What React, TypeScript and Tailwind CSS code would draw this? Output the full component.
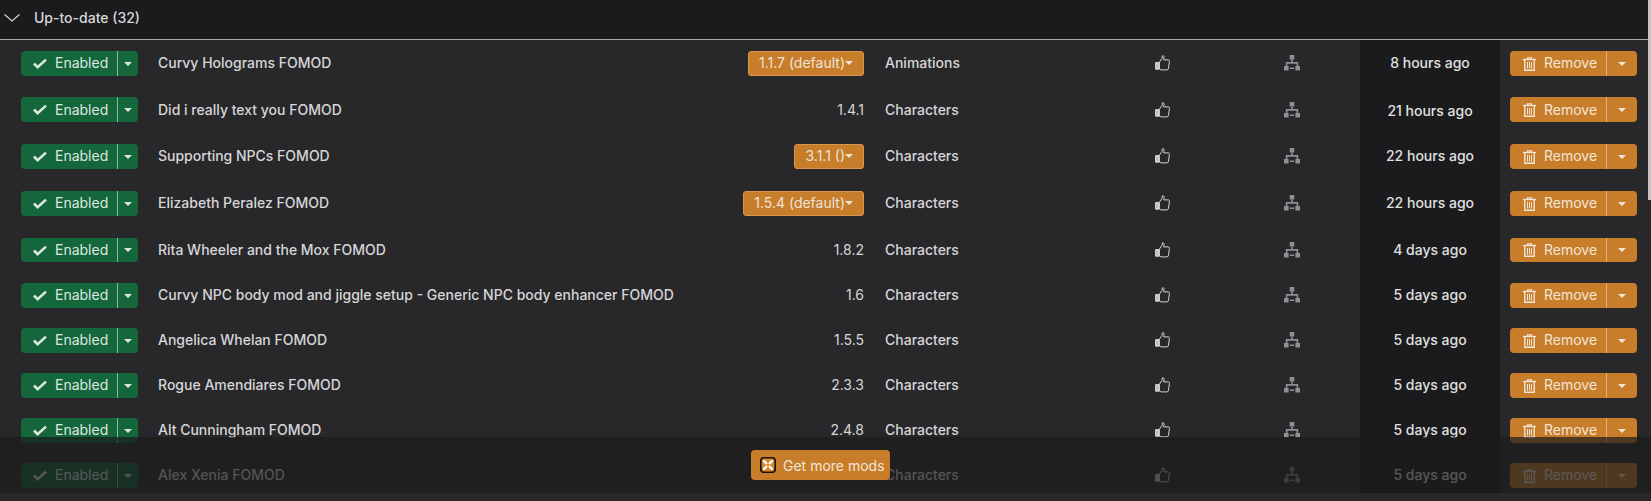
import React from "react";

const rows: [string, string, boolean, string, string, number][] = [
  ["Curvy Holograms FOMOD", "1.1.7 (default)", true, "Animations", "8 hours ago", 47],
  ["Did i really text you FOMOD", "1.4.1", false, "Characters", "21 hours ago", 46],
  ["Supporting NPCs FOMOD", "3.1.1 ()", true, "Characters", "22 hours ago", 47],
  ["Elizabeth Peralez FOMOD", "1.5.4 (default)", true, "Characters", "22 hours ago", 47],
  ["Rita Wheeler and the Mox FOMOD", "1.8.2", false, "Characters", "4 days ago", 45],
  ["Curvy NPC body mod and jiggle setup - Generic NPC body enhancer FOMOD", "1.6", false, "Characters", "5 days ago", 45],
  ["Angelica Whelan FOMOD", "1.5.5", false, "Characters", "5 days ago", 45],
  ["Rogue Amendiares FOMOD", "2.3.3", false, "Characters", "5 days ago", 45],
  ["Alt Cunningham FOMOD", "2.4.8", false, "Characters", "5 days ago", 45],
  ["Alex Xenia FOMOD", "3.1.1", false, "Characters", "5 days ago", 45],
];

const Caret = () => (
  <svg width="8" height="4" viewBox="0 0 8 4" className="block"><path d="M0 0h8L4 4z" fill="currentColor" /></svg>
);
const Check = () => (
  <svg width="14" height="11" viewBox="0 0 14 11"><path d="M1 5.5l3.6 3.6L13 1.6" fill="none" stroke="currentColor" strokeWidth="2.6" /></svg>
);
const Trash = () => (
  <svg width="13" height="14" viewBox="0 0 13 14" fill="none" stroke="currentColor"><path d="M0 2.5h13" strokeWidth="1.4" /><path d="M4.5 2.5V.8h4v1.7" strokeWidth="1.2" /><path d="M1.8 2.5v10.8h9.4V2.5" strokeWidth="1.4" /><path d="M4.5 5v6.5M6.5 5v6.5M8.5 5v6.5" strokeWidth="1" /></svg>
);
const Thumb = () => (
  <svg width="15" height="16" viewBox="0 0 15 16" fill="none" stroke="currentColor" strokeWidth="0.9"><path d="M4.3 7.2 7.2 3.2V1l1.1-.3c1 .6 1 2 .3 4.2h4.8c1 0 1.3.9 1 1.6l-1 7.2c-.2.8-.7 1.2-1.5 1.2H6.4L4.3 14z" /><path d="M.6 7.6h3.4v6.6H.6z" fill="#bdbdbd" /></svg>
);
const Tree = () => (
  <svg width="16" height="16" viewBox="0 0 16 16" fill="currentColor"><path d="M5.7 0h4.6v4.5H5.7zM0 11h4.6v4.5H0zM11.4 11H16v4.5h-4.6z" /><path d="M7.2 4.5h1.6v2.6h5.4v3.9h-1.6V8.7H3.4V11H1.8V7.1h5.4zM5.8 12.6h4.4v1.4H5.8z" /></svg>
);

function Row({ r }: { r: (typeof rows)[number] }) {
  const [name, version, drop, cat, time, h] = r;
  const heightClass = h === 47 ? "h-[47px]" : h === 46 ? "h-[46px] pb-[1px]" : "h-[45px]";
  const lift = h === 47 ? "pb-[2px]" : "";
  const btnSpan = h === 46 ? "" : "pb-[2px]";
  const rita = name.startsWith("Rita");
  const btnBox = rita ? "h-[24px] mt-[1px]" : h === 45 ? "h-[25px] mt-[2px]" : "h-[25px]";
  return (
    <div className={`flex items-center ${heightClass}`}>
      <div className="w-[158px] pl-[21px] shrink-0">
        <div className={`flex w-[117px] rounded-[4px] bg-[#14673a] text-[#dfe6e1] ${btnBox}`}>
          <div className="w-[97px] flex items-center pl-[12px] gap-[8px] border-r border-[#8fb89f]">
            <Check />
            <span className={btnSpan}>Enabled</span>
          </div>
          <div className="flex-1 flex items-center justify-center"><Caret /></div>
        </div>
      </div>
      <div className={`w-[537px] shrink-0 whitespace-nowrap text-[#d6d6d8] font-[450] ${lift}`}>{name}</div>
      <div className="w-[169px] shrink-0 flex justify-end">
        {drop ? (
          <div className="h-[25px] -mt-[1px] flex items-center px-[10px] rounded-[3px] bg-[#c87d2b] border border-[#d8954c] text-[#ece4d8]">
            <span className="pb-[2px]">{version}</span>
            <Caret />
          </div>
        ) : (
          <span className="text-[#d6d6d8]">{version}</span>
        )}
      </div>
      <div className={`w-[291px] shrink-0 pl-[21px] text-[#d6d6d8] font-[450] ${lift}`}>{cat}</div>
      <div className={`w-[129px] shrink-0 text-[#e8e8e8] ${lift}`}><Thumb /></div>
      <div className={`w-[76px] shrink-0 text-[#8f8f94] ${lift}`}><Tree /></div>
      <div className={`w-[140px] self-stretch shrink-0 bg-[#1b1b1d] flex items-center justify-center text-[#e0e0e0] font-[450] ${h === 46 ? "-mb-[1px]" : ""} ${lift}`}>{time}</div>
      <div className="pl-[10px]">
        <div className={`flex w-[127px] rounded-[4px] bg-[#c87d2b] text-[#f0e6d8] ${btnBox}`}>
          <div className="w-[97px] flex items-center pl-[13px] gap-[8px] border-r border-[#e0b27f]">
            <Trash />
            <span className={btnSpan}>Remove</span>
          </div>
          <div className="flex-1 flex items-center justify-center"><Caret /></div>
        </div>
      </div>
    </div>
  );
}

export default function App() {
  return (
    <div className="relative w-[1651px] h-[501px] overflow-hidden bg-[#28282a] text-[14px] font-['Inter',sans-serif] font-normal">
      <div className="h-[40px] flex items-center bg-[#1b1b1d] border-b border-[#a8a8a8] text-[#d6d6d8] pb-[4px] mr-[3px]">
        <svg width="16" height="8" viewBox="0 0 16 8" className="ml-[4px] mr-[14px]"><path d="M.5.5 8 7 15.5.5" fill="none" stroke="currentColor" strokeWidth="1.1" /></svg>
        <span className="font-[450]">Up-to-date (32)</span>
      </div>
      <div className="h-[453px] overflow-hidden">
        {rows.map((r) => <Row key={r[0]} r={r} />)}
      </div>
      <div className="absolute top-0 right-0 w-[3px] h-[200px] bg-[#c4c4c4]" />
      <div className="absolute left-0 right-0 top-[437px] h-[56px] bg-[#1b1b1d]/70 flex items-center justify-center pr-[10px]">
        <div className="h-[30px] w-[139px] rounded-[4px] bg-[#c87d2b] text-[#f0e6d8] flex items-center pl-[9px] gap-[7px]">
          <svg width="16" height="16" viewBox="0 0 16 16"><rect x=".8" y=".8" width="14.4" height="14.4" rx="3" fill="#d98a2b" stroke="#111" strokeWidth="1.6" /><path d="M3.5 3.5l3.5 3.5M12.5 3.5 9 7M3.5 12.5 7 9M12.5 12.5 9 9" stroke="#fff" strokeWidth="2.4" /></svg>
          <span>Get more mods</span>
        </div>
      </div>
    </div>
  );
}
